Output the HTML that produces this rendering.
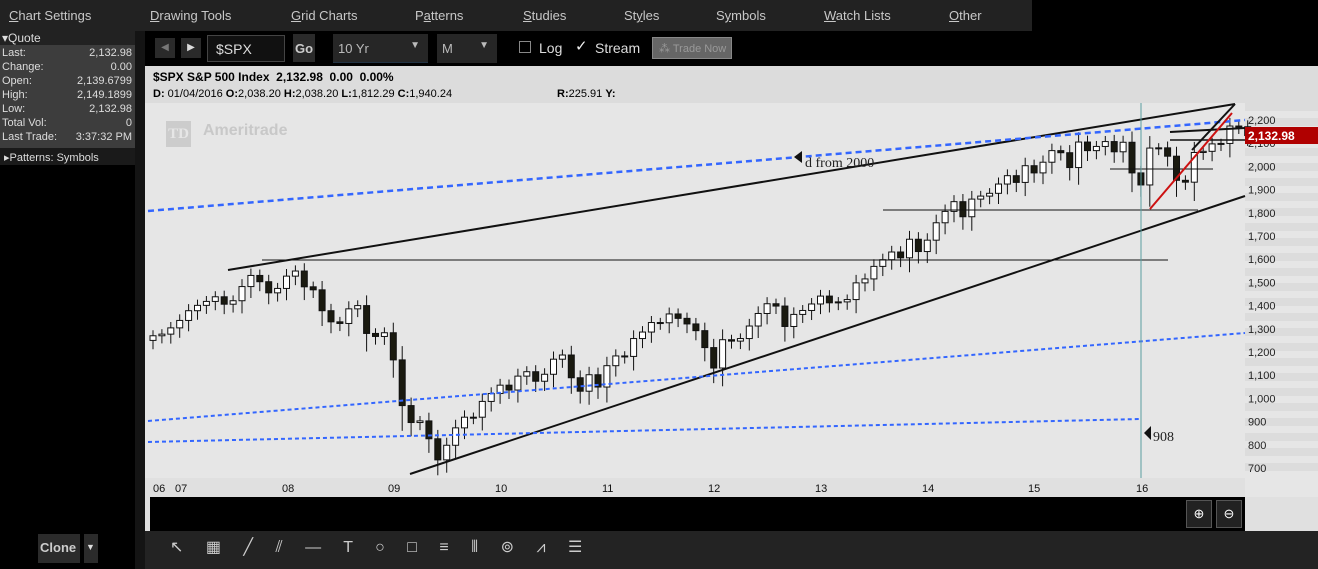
<!DOCTYPE html>
<html><head><meta charset="utf-8"><style>
*{margin:0;padding:0;box-sizing:border-box}
body{width:1318px;height:569px;background:#000;position:relative;overflow:hidden;font-family:"Liberation Sans",sans-serif;font-size:13px;color:#ccc}
.a{position:absolute}
#menu{left:0;top:0;width:1318px;height:31px;background:#000}
#menu .bar{position:absolute;left:0;top:0;width:1032px;height:31px;background:#222}
#menu span{position:absolute;top:8px;color:#c8c8c8;font-size:13px}
#quote{left:0;top:31px;width:135px;height:117px;background:#3d3d3d;font-size:11px;color:#ddd}
#quote .r{position:absolute;left:2px;right:3px;height:14px}
#quote .r b{font-weight:normal;float:right}
#chart{left:145px;top:66px;width:1173px;height:431px;background:#e6e6e6}
</style></head><body>
<div id="menu" class="a"><div class="bar"></div>
<span style="left:9px"><u>C</u>hart Settings</span>
<span style="left:150px"><u>D</u>rawing Tools</span>
<span style="left:291px"><u>G</u>rid Charts</span>
<span style="left:415px">P<u>a</u>tterns</span>
<span style="left:523px"><u>S</u>tudies</span>
<span style="left:624px">St<u>y</u>les</span>
<span style="left:716px">S<u>y</u>mbols</span>
<span style="left:824px"><u>W</u>atch Lists</span>
<span style="left:949px"><u>O</u>ther</span>
</div>
<div id="quote" class="a">
<div class="r" style="top:0;left:0;right:0;padding-left:2px;background:#222;font-size:12px">▾Quote</div>
<div class="r" style="top:16px">Last:<b>2,132.98</b></div>
<div class="r" style="top:30px">Change:<b>0.00</b></div>
<div class="r" style="top:44px">Open:<b>2,139.6799</b></div>
<div class="r" style="top:58px">High:<b>2,149.1899</b></div>
<div class="r" style="top:72px">Low:<b>2,132.98</b></div>
<div class="r" style="top:86px">Total Vol:<b>0</b></div>
<div class="r" style="top:100px">Last Trade:<b>3:37:32 PM</b></div>
</div>
<div class="a" style="left:0;top:148px;width:135px;height:17px;background:#1a1a1a;font-size:11px;color:#ddd;padding:3px 0 0 4px">▸Patterns: Symbols</div>
<div class="a" style="left:135px;top:31px;width:10px;height:538px;background:#141414"></div>
<!-- toolbar -->
<div class="a" style="left:155px;top:38px;width:20px;height:20px;background:#2a2a2a;color:#777;font-size:10px;text-align:center;line-height:20px">◀</div>
<div class="a" style="left:181px;top:38px;width:20px;height:20px;background:#2a2a2a;color:#ddd;font-size:10px;text-align:center;line-height:20px">▶</div>
<div class="a" style="left:207px;top:35px;width:78px;height:27px;border:1px solid #444;background:#111;color:#ddd;padding:5px 0 0 8px;font-size:14px">$SPX</div>
<div class="a" style="left:293px;top:34px;width:22px;height:28px;background:#2a2a2a;color:#ccc;font-weight:bold;padding:7px 0 0 2px;font-size:13px">Go</div>
<div class="a" style="left:333px;top:34px;width:95px;height:29px;background:#262626;border-bottom:1px solid #234;color:#bbb;padding:7px 0 0 5px;font-size:13px">10 Yr<span style="position:absolute;right:8px;top:6px;font-size:10px">▼</span></div>
<div class="a" style="left:437px;top:34px;width:60px;height:29px;background:#262626;color:#bbb;padding:7px 0 0 5px;font-size:13px">M<span style="position:absolute;right:8px;top:6px;font-size:10px">▼</span></div>
<div class="a" style="left:519px;top:41px;width:12px;height:12px;border:1px solid #888"></div>
<div class="a" style="left:539px;top:40px;color:#ddd;font-size:14px">Log</div>
<div class="a" style="left:575px;top:37px;color:#eee;font-size:15px">✓</div>
<div class="a" style="left:595px;top:40px;color:#ddd;font-size:14px">Stream</div>
<div class="a" style="left:652px;top:37px;width:80px;height:22px;background:#666;border:1px solid #888;color:#999;font-size:11px;padding:4px 0 0 6px">⁂ Trade Now</div>
<div id="chart" class="a"></div>
<div class="a" style="left:145px;top:66px;width:1173px;height:37px;background:#dcdcdc"></div>
<div class="a" style="left:153px;top:70px;color:#000;font-weight:bold;font-size:12px">$SPX S&amp;P 500 Index&nbsp; 2,132.98&nbsp; 0.00&nbsp; 0.00%</div>
<div class="a" style="left:153px;top:88px;color:#000;font-size:11px"><b>D:</b> 01/04/2016 <b>O:</b>2,038.20 <b>H:</b>2,038.20 <b>L:</b>1,812.29 <b>C:</b>1,940.24</div>
<div class="a" style="left:557px;top:88px;color:#000;font-size:11px"><b>R:</b>225.91 <b>Y:</b></div>
<div class="a" style="left:166px;top:121px;width:25px;height:26px;background:#ccc;color:#e6e6e6;font-weight:bold;font-size:15px;text-align:center;line-height:26px;font-family:'Liberation Serif',serif">TD</div>
<div class="a" style="left:203px;top:122px;color:#c8c8c8;font-weight:bold;font-size:16px">Ameritrade</div>
<div class="a" style="left:145px;top:478px;width:1100px;height:19px;background:#e0e0e0"></div>
<svg class="a" style="left:0;top:0" width="1318" height="569" id="s"></svg>
<div class="a" style="left:145px;top:497px;width:1173px;height:34px;background:#e0e0e0"></div>
<div class="a" style="left:150px;top:497px;width:1095px;height:34px;background:#000"></div>
<div class="a" style="left:1186px;top:500px;width:26px;height:28px;background:#222;border:1px solid #555;color:#fff;text-align:center;line-height:26px">⊕</div>
<div class="a" style="left:1216px;top:500px;width:26px;height:28px;background:#222;border:1px solid #555;color:#fff;text-align:center;line-height:26px">⊖</div>
<div class="a" style="left:145px;top:531px;width:1173px;height:38px;background:#232323"></div>
<div class="a" style="left:38px;top:534px;width:42px;height:29px;background:#2b2b2b;color:#ccc;font-weight:bold;font-size:13px;padding:6px 0 0 2px">Clone</div>
<div class="a" style="left:84px;top:534px;width:14px;height:29px;background:#2b2b2b;color:#ddd;font-size:9px;padding:8px 0 0 2px">▼</div>
<div class="a" style="left:170px;top:537px;color:#ccc;font-size:16px;letter-spacing:9px;white-space:nowrap">↖ ▦ ╱ ⫽ — T ○ □ ≡ ⦀ ⊚ ⩘ ☰</div>
<script>
const s=document.getElementById('s');let h='';
for(let i=0;i<25;i++)h+=`<rect x="1245" y="${103+i*15}" width="73" height="8" fill="#dcdcdc"/>`;
const Y=p=>120+(2200-p)*0.232;
for(let p=700;p<=2200;p+=100){h+=`<text x="1248" y="${Y(p)+4}" font-size="11" fill="#222" font-family="Liberation Sans">${p>=1000?(p/1000|0)+','+String(p%1000).padStart(3,'0'):p}</text>`}
const yrs=[['06',158],['07',180],['08',287],['09',393],['10',500],['11',607],['12',713],['13',820],['14',927],['15',1033],['16',1141]];
yrs.forEach(a=>h+=`<text x="${a[1]-5}" y="492" font-size="11" fill="#111" font-family="Liberation Sans">${a[0]}</text>`);
const c=[1270,1277,1304,1336,1378,1401,1418,1438,1406,1421,1482,1530,1503,1455,1474,1527,1549,1481,1468,1378,1330,1323,1386,1400,1280,1267,1283,1166,969,896,903,826,735,798,873,919,919,987,1021,1057,1036,1096,1115,1074,1104,1169,1187,1089,1031,1102,1049,1141,1183,1181,1258,1286,1327,1326,1364,1345,1321,1292,1219,1131,1253,1247,1258,1312,1366,1408,1398,1310,1362,1379,1407,1441,1412,1416,1426,1498,1515,1569,1598,1631,1606,1686,1633,1682,1757,1806,1848,1783,1859,1872,1884,1924,1960,1931,2003,1972,2018,2068,2059,1995,2105,2068,2086,2107,2063,2104,1972,1920,2079,2080,2044,1940,1932,2060,2065,2097,2099,2174,2171,2133];
let o=1250;
c.forEach((v,i)=>{const x=153+i*8.9;const r=Math.abs(v-o);const hi=Math.max(o,v)+20+r*0.2,lo=Math.min(o,v)-30-r*0.4;
h+=`<line x1="${x}" x2="${x}" y1="${Y(hi)}" y2="${Y(lo)}" stroke="#111"/>`;
const t=Y(Math.max(o,v)),b=Y(Math.min(o,v));
h+=`<rect x="${x-3}" y="${t}" width="6" height="${Math.max(b-t,1)}" fill="${v<o?'#1a1a10':'#fff'}" stroke="#111"/>`;o=v;});
const L=(a,b,c2,d,col,w,da)=>h+=`<line x1="${a}" y1="${b}" x2="${c2}" y2="${d}" stroke="${col}" stroke-width="${w}" ${da?'stroke-dasharray="'+da+'"':''}/>`;
L(228,270,1235,104,'#111',2);L(410,474,1245,196,'#111',2);
L(148,211,1245,120,'#3366ff',2.5,'6,4');L(148,421,1245,333,'#3366ff',2,'4,3');L(148,442,1141,419,'#3366ff',2,'4,3');
L(262,260,1168,260,'#111',1);L(883,210,1198,210,'#111',1);L(1110,169,1213,169,'#111',1);L(1170,140,1245,140,'#111',1.5);L(1170,132,1245,128,'#111',2);
L(1141,103,1141,478,'#5a9ea0',1);L(1150,209,1232,113,'#cc1111',2);L(1192,150,1235,104,'#111',2);
h+=`<polygon points="794,157 802,151 802,163" fill="#111"/><text x="805" y="167" font-size="14" fill="#222" font-family="Liberation Serif">d from 2000</text>`;
h+=`<polygon points="1144,433 1151,426 1151,440" fill="#111"/><text x="1153" y="441" font-size="14" fill="#222" font-family="Liberation Serif">908</text>`;
h+=`<rect x="1245" y="127" width="73" height="17" fill="#b00000"/><text x="1248" y="140" font-size="12" font-weight="bold" fill="#fff" font-family="Liberation Sans">2,132.98</text>`;
s.innerHTML=h;
</script>
</body></html>
